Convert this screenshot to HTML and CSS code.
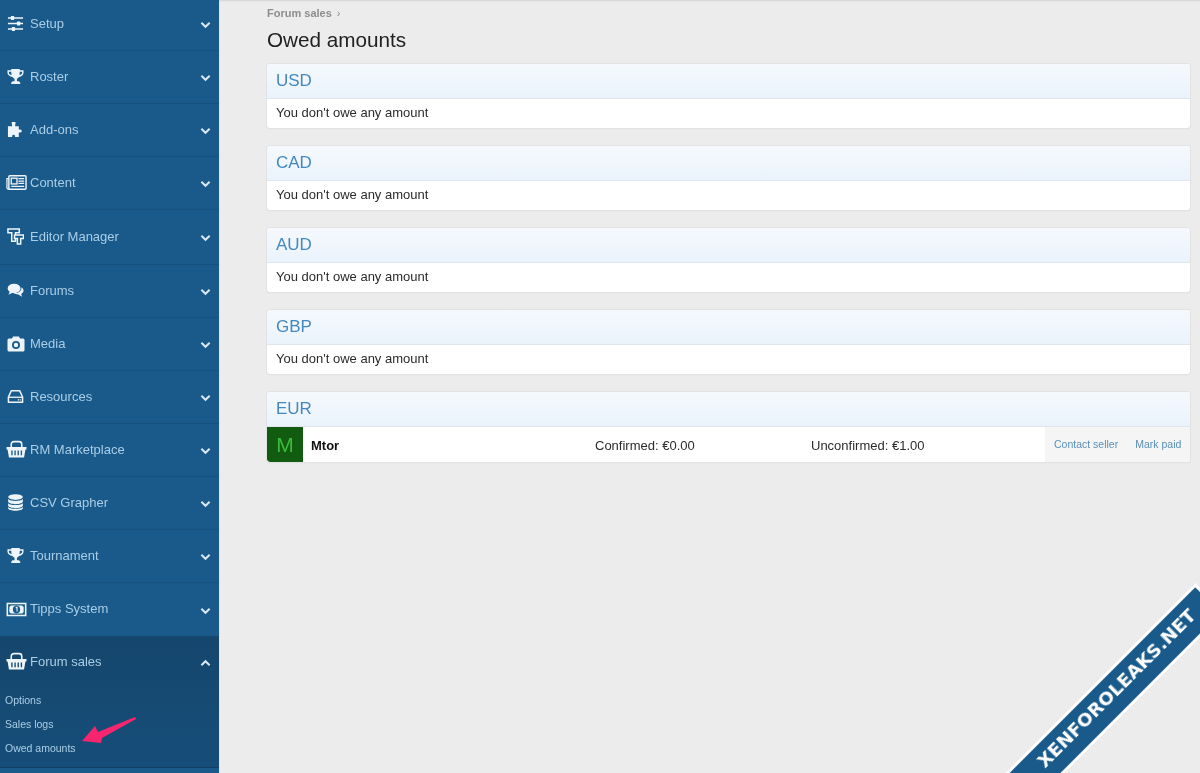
FILE: index.html
```html
<!DOCTYPE html>
<html lang="en">
<head>
<meta charset="utf-8">
<title>Owed amounts</title>
<link rel="stylesheet" href="styles.css">
</head>
<body>
<div class="page">
  <nav class="sidebar">
    <div class="row row-first">
      <svg class="icon" viewBox="0 0 18 18"><path d="M1 3.200h16M1 9h16M1 14.800h16" stroke="currentColor" stroke-width="1.700" fill="none"/><rect x="4" y="1" width="3.600" height="4.400" rx=".8" fill="currentColor"/><rect x="10.500" y="6.800" width="3.600" height="4.400" rx=".8" fill="currentColor"/><rect x="5" y="12.600" width="3.600" height="4.400" rx=".8" fill="currentColor"/></svg>
      <span class="label">Setup</span><svg class="chev" viewBox="0 0 12 8"><path d="M1.500 1.500 6 6l4.500-4.500" fill="none" stroke="currentColor" stroke-width="2.200"/></svg>
    </div>
    <div class="row">
      <svg class="icon" viewBox="0 0 18 18"><path d="M4.500 1h9v1.500H17.500V5c0 2.500-2 4-4.800 4.500-.6.900-1.200 1.400-2.200 1.800V14h2.500v1.200h1V17H4.500v-1.800h1V14H8v-2.700c-1-.4-1.600-.9-2.200-1.800C3 9 .5 7.500.5 5V2.500h4zM2 4v1c0 1.200 1 2 2.900 2.500C4.600 6.500 4.500 5.300 4.500 4zm11.500 0c0 1.300-.1 2.500-.4 3.500C15 7 16 6.200 16 5V4z" fill="currentColor" fill-rule="evenodd"/></svg>
      <span class="label">Roster</span><svg class="chev" viewBox="0 0 12 8"><path d="M1.500 1.500 6 6l4.500-4.500" fill="none" stroke="currentColor" stroke-width="2.200"/></svg>
    </div>
    <div class="row">
      <svg class="icon" viewBox="0 0 18 18"><path d="M5 1h4v1.500L8.500 5.500H12.500V9H14a1.500 1.500 0 1 1 0 3.200h-1.500V17H8.500v-1.500a1.600 1.600 0 0 0-3 0V17H1V5.500h4.500L5 2.500z" fill="currentColor"/></svg>
      <span class="label">Add-ons</span><svg class="chev" viewBox="0 0 12 8"><path d="M1.500 1.500 6 6l4.500-4.500" fill="none" stroke="currentColor" stroke-width="2.200"/></svg>
    </div>
    <div class="row">
      <svg class="icon icon-wide" viewBox="0 0 22 18"><rect x="3" y="2" width="18" height="14" rx="1" fill="none" stroke="currentColor" stroke-width="1.500"/><path d="M3 5H1v9.500A1.500 1.500 0 0 0 2.500 16H4" fill="none" stroke="currentColor" stroke-width="1.300"/><rect x="5.500" y="4.500" width="6" height="6" fill="none" stroke="currentColor" stroke-width="1.400"/><path d="M13 5h6M13 7.500h6M13 10h6M5.500 13h13.500" stroke="currentColor" stroke-width="1.400"/></svg>
      <span class="label">Content</span><svg class="chev" viewBox="0 0 12 8"><path d="M1.500 1.500 6 6l4.500-4.500" fill="none" stroke="currentColor" stroke-width="2.200"/></svg>
    </div>
    <div class="row row-tall">
      <svg class="icon" viewBox="0 0 18 18"><path d="M1 1h12v4h-4v9H5V5H1z" fill="none" stroke="currentColor" stroke-width="1.600"/><path d="M8 7.500h9.500v3.500h-3v6H11v-6H8z" fill="#195a8b" stroke="currentColor" stroke-width="1.600"/></svg>
      <span class="label">Editor Manager</span><svg class="chev" viewBox="0 0 12 8"><path d="M1.500 1.500 6 6l4.500-4.500" fill="none" stroke="currentColor" stroke-width="2.200"/></svg>
    </div>
    <div class="row">
      <svg class="icon" viewBox="0 0 18 18"><ellipse cx="7.500" cy="6.800" rx="6.800" ry="5" fill="currentColor"/><path d="M3 10l-1.500 3.500L6.500 11z" fill="currentColor"/><path d="M15.300 5.500c1.500 1 2.200 2.300 2.200 3.600 0 1.500-1 2.800-2.500 3.600l1 3-4-2.500c-2 0-3.700-.5-4.800-1.500 4.500.5 8.500-2 8.100-6.200z" fill="currentColor"/></svg>
      <span class="label">Forums</span><svg class="chev" viewBox="0 0 12 8"><path d="M1.500 1.500 6 6l4.500-4.500" fill="none" stroke="currentColor" stroke-width="2.200"/></svg>
    </div>
    <div class="row">
      <svg class="icon icon-cam" viewBox="0 0 18 18"><path fill-rule="evenodd" d="M2 3.500h3L6 1.500h6l1 2h3A1.500 1.500 0 0 1 17.500 5v10a1.500 1.500 0 0 1-1.500 1.500H2A1.500 1.500 0 0 1 .5 15V5A1.500 1.500 0 0 1 2 3.500zM9 6a4 4 0 1 0 0 8 4 4 0 0 0 0-8zm0 1.800a2.200 2.200 0 1 1 0 4.400 2.200 2.200 0 0 1 0-4.400z" fill="currentColor"/></svg>
      <span class="label">Media</span><svg class="chev" viewBox="0 0 12 8"><path d="M1.500 1.500 6 6l4.500-4.500" fill="none" stroke="currentColor" stroke-width="2.200"/></svg>
    </div>
    <div class="row">
      <svg class="icon" viewBox="0 0 18 18"><path d="M4.500 3h9l3 6.500V15H1.500V9.500z" fill="none" stroke="currentColor" stroke-width="1.600" stroke-linejoin="round"/><path d="M2 9.800h14" stroke="currentColor" stroke-width="1.400"/><path d="M11.500 12.500h1.500M14 12.500h1" stroke="currentColor" stroke-width="1.400"/></svg>
      <span class="label">Resources</span><svg class="chev" viewBox="0 0 12 8"><path d="M1.500 1.500 6 6l4.500-4.500" fill="none" stroke="currentColor" stroke-width="2.200"/></svg>
    </div>
    <div class="row">
      <svg class="icon icon-wide" viewBox="0 0 20 18"><path d="M5 7V4a2.500 2.500 0 0 1 2.500-2.500h5A2.500 2.500 0 0 1 15 4v3" fill="none" stroke="currentColor" stroke-width="1.500"/><path fill-rule="evenodd" d="M.5 6.500h19V9h-1l-1.300 7.500H2.800L1.500 9h-1zM5 10v4.500h1.300V10zm3 0v4.500h1.300V10zm3 0v4.500h1.300V10zm3 0v4.500h1.300V10z" fill="currentColor"/></svg>
      <span class="label">RM Marketplace</span><svg class="chev" viewBox="0 0 12 8"><path d="M1.500 1.500 6 6l4.500-4.500" fill="none" stroke="currentColor" stroke-width="2.200"/></svg>
    </div>
    <div class="row">
      <svg class="icon" viewBox="0 0 18 18"><ellipse cx="9" cy="3.300" rx="7.800" ry="3" fill="currentColor"/><path d="M1.200 5.300c1.500 1.500 4.800 2 7.800 2s6.300-.5 7.800-2V8c0 1.500-3.500 2.800-7.800 2.800S1.200 9.500 1.200 8z" fill="currentColor"/><path d="M1.200 9.700c1.500 1.500 4.800 2 7.800 2s6.300-.5 7.800-2v2.500c0 1.500-3.500 2.800-7.800 2.800s-7.800-1.300-7.800-2.800z" fill="currentColor"/><path d="M1.200 13.700c1.500 1.500 4.800 2 7.800 2s6.300-.5 7.800-2v1.500c0 1.500-3.500 2.600-7.800 2.600s-7.800-1.100-7.800-2.600z" fill="currentColor"/></svg>
      <span class="label">CSV Grapher</span><svg class="chev" viewBox="0 0 12 8"><path d="M1.500 1.500 6 6l4.500-4.500" fill="none" stroke="currentColor" stroke-width="2.200"/></svg>
    </div>
    <div class="row">
      <svg class="icon" viewBox="0 0 18 18"><path d="M4.500 1h9v1.500H17.500V5c0 2.500-2 4-4.800 4.500-.6.900-1.200 1.400-2.200 1.800V14h2.500v1.200h1V17H4.500v-1.800h1V14H8v-2.700c-1-.4-1.600-.9-2.200-1.800C3 9 .5 7.500.5 5V2.500h4zM2 4v1c0 1.200 1 2 2.900 2.500C4.600 6.500 4.500 5.300 4.500 4zm11.500 0c0 1.300-.1 2.500-.4 3.500C15 7 16 6.200 16 5V4z" fill="currentColor" fill-rule="evenodd"/></svg>
      <span class="label">Tournament</span><svg class="chev" viewBox="0 0 12 8"><path d="M1.500 1.500 6 6l4.500-4.500" fill="none" stroke="currentColor" stroke-width="2.200"/></svg>
    </div>
    <div class="row row-last">
      <svg class="icon icon-wide" viewBox="0 0 20 16"><path fill-rule="evenodd" d="M.5 1.500h19v13H.5zM2 3v10h16V3zm2.500 1.200h11a2 2 0 0 0 1.300 1.300v5a2 2 0 0 0-1.300 1.300h-11a2 2 0 0 0-1.300-1.300v-5a2 2 0 0 0 1.300-1.300zM10 4.500a3.500 3.500 0 1 0 0 7 3.500 3.500 0 0 0 0-7z" fill="currentColor"/><path d="M9.200 6.300 10.500 5.800V10" stroke="currentColor" fill="none"/></svg>
      <span class="label">Tipps System</span><svg class="chev" viewBox="0 0 12 8"><path d="M1.500 1.500 6 6l4.500-4.500" fill="none" stroke="currentColor" stroke-width="2.200"/></svg>
    </div>
    <div class="section">
      <div class="row row-open">
        <svg class="icon icon-wide" viewBox="0 0 20 18"><path d="M5 7V4a2.500 2.500 0 0 1 2.500-2.500h5A2.500 2.500 0 0 1 15 4v3" fill="none" stroke="currentColor" stroke-width="1.500"/><path fill-rule="evenodd" d="M.5 6.500h19V9h-1l-1.300 7.500H2.800L1.500 9h-1zM5 10v4.500h1.300V10zm3 0v4.500h1.300V10zm3 0v4.500h1.300V10zm3 0v4.500h1.300V10z" fill="currentColor"/></svg>
        <span class="label">Forum sales</span><svg class="chev" viewBox="0 0 12 8"><path d="M1.500 6.500 6 2l4.500 4.500" fill="none" stroke="currentColor" stroke-width="2.200"/></svg>
      </div>
      <a class="sub">Options</a>
      <a class="sub">Sales logs</a>
      <a class="sub">Owed amounts</a>
    </div>
  </nav>
  <main class="main">
    <div class="crumb">Forum sales <span class="crumb-sep">&#8250;</span></div>
    <h1 class="title">Owed amounts</h1>
    <section class="card">
      <h2 class="card-head">USD</h2>
      <div class="card-body">You don't owe any amount</div>
    </section>
    <section class="card">
      <h2 class="card-head">CAD</h2>
      <div class="card-body">You don't owe any amount</div>
    </section>
    <section class="card">
      <h2 class="card-head">AUD</h2>
      <div class="card-body">You don't owe any amount</div>
    </section>
    <section class="card">
      <h2 class="card-head">GBP</h2>
      <div class="card-body">You don't owe any amount</div>
    </section>
    <section class="card">
      <h2 class="card-head">EUR</h2>
      <div class="seller">
        <div class="avatar">M</div>
        <div class="seller-name">Mtor</div>
        <div class="seller-num">Confirmed: €0.00</div>
        <div class="seller-num">Unconfirmed: €1.00</div>
        <div class="actions"><a>Contact seller</a><a>Mark paid</a></div>
      </div>
    </section>
  </main>
  <svg class="arrow" viewBox="0 0 60 32" width="60" height="32"><polygon points="2,28 15,13 18,19 55,4 56,6 22,25 21,30" fill="#f5266f"/></svg>
  <div class="ribbon-clip"><div class="ribbon">XENFOROLEAKS.NET</div></div>
</div>
</body>
</html>
```
FILE: styles.css
```css
* { box-sizing: border-box; }
html, body { margin: 0; padding: 0; }
body { font-family: "Liberation Sans", Arial, sans-serif; background: #ececec; color: #222; }
.page { position: relative; display: flex; width: 1200px; height: 773px; overflow: hidden; filter: blur(.35px); }

.sidebar { flex: 0 0 219px; height: 773px; background: #195a8b; color: #a9cde6; box-shadow: 1px 0 0 #dfe6ec; }
.row { display: flex; align-items: center; height: 53px; padding: 0 8px 2px 7px; font-size: 13px; border-bottom: 1px solid #17527f; }
.row-first { height: 51px; padding-bottom: 4px; }
.row-tall { height: 55px; }
.row-last { border-bottom: 0; }
.row-open { height: 50px; border-bottom: 0; padding-bottom: 0; }
.icon { flex: 0 0 auto; width: 17px; height: 17px; margin-right: 6px; margin-top: 1px; color: #eef5fa; }
.icon-wide { width: 21px; height: 19px; margin-left: -1px; margin-right: 3px; }
.icon-cam { width: 18px; height: 18px; margin-right: 5px; }
.label { flex: 1; }
.chev { width: 11px; height: 8px; color: #d7e7f3; margin-top: 4px; }

.section { background: linear-gradient(#15466d, #164e79); height: 132px; border-bottom: 1px solid #123f63; }
.sub { display: block; height: 24px; line-height: 24px; padding-left: 5px; font-size: 10.500px; color: #a9cde6; }
.row-open + .sub { margin-top: 2px; }

.main { flex: 1; padding: 8px 10px 0 48px; box-shadow: inset 0 2px 2px -1px #d4d4d4; }
.crumb { font-size: 11px; font-weight: bold; color: #8d8d8d; height: 11px; line-height: 11px; }
.crumb-sep { font-weight: normal; margin-left: 2px; }
.title { margin: 8px 0 12px; font-size: 20.700px; line-height: 25px; font-weight: normal; color: #222; }

.card { margin-bottom: 18px; background: #fff; border-radius: 3px; box-shadow: 0 0 0 1px #e2e2e2, 0 1px 1px #cfcfcf; overflow: hidden; }
.card-head { margin: 0; height: 35px; padding-left: 9px; font-size: 17px; line-height: 33px; font-weight: normal; color: #4488bd; background: linear-gradient(#f5f9fd, #eaf3fc); border-bottom: 1px solid #dfe6ec; }
.card-body { height: 29px; padding-left: 9px; font-size: 13px; line-height: 28px; color: #2b2b2b; }

.seller { display: grid; grid-template-columns: 36px 292px 216px 1fr auto; align-items: center; height: 35px; font-size: 13px; }
.avatar { height: 35px; line-height: 35px; text-align: center; font-size: 21px; color: #3cba3c; background: #125c12; border-radius: 0 0 0 3px; }
.seller-name { padding: 1px 0 0 8px; font-weight: bold; color: #111; }
.seller-num { padding-top: 1px; color: #2b2b2b; }
.actions { display: flex; gap: 17px; align-items: center; height: 35px; width: 145px; padding: 0 0 2px 9px; background: #f5f5f5; font-size: 10.500px; color: #5a8fb9; }

.arrow { position: absolute; left: 80px; top: 713px; }
.ribbon-clip { position: absolute; right: 0; bottom: 0; width: 200px; height: 200px; overflow: hidden; }
.ribbon { position: absolute; left: -46px; top: 110px; width: 300px; height: 42px; padding-left: 40px; line-height: 31px; text-align: center; background: #195a8b; border: 3px solid #fff; color: #fff; font-family: "DejaVu Sans", sans-serif; font-size: 18.500px; font-weight: bold; transform: rotate(-45deg); }
```
